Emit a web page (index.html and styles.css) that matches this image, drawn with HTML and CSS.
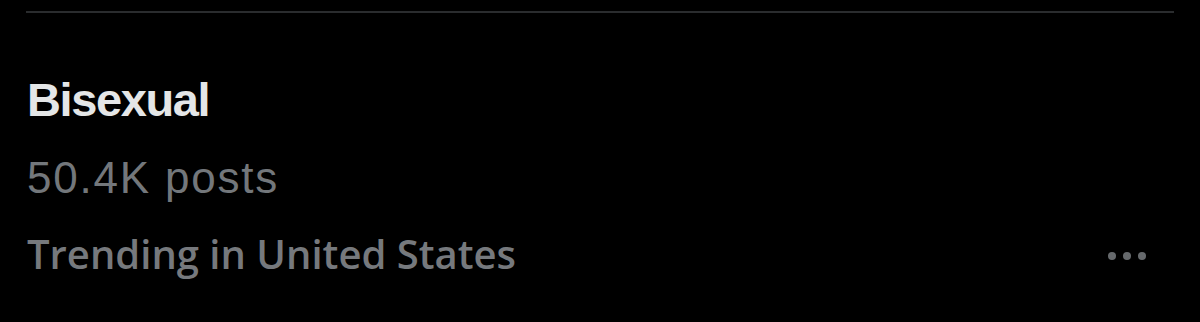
FILE: index.html
```html
<!DOCTYPE html>
<html lang="en">
<head>
  <meta charset="UTF-8">
  <title>Trending</title>
  <link rel="stylesheet" href="styles.css">
</head>
<body>
  <div class="divider"></div>
  <section class="trend">
    <h2 class="trend-name">Bisexual</h2>
    <p class="trend-count">50.4K posts</p>
    <div class="trend-footer">
      <span class="trend-place">Trending in United States</span>
      <button class="more" aria-label="More">
        <svg viewBox="0 0 40 12" width="40" height="12">
          <circle cx="5" cy="6" r="4"></circle>
          <circle cx="20" cy="6" r="4"></circle>
          <circle cx="35" cy="6" r="4"></circle>
        </svg>
      </button>
    </div>
  </section>
</body>
</html>
```

FILE: styles.css
```css
body {
  margin: 0;
  background: #000;
  font-family: 'Liberation Sans', Arial, sans-serif;
  height: 322px;
  overflow: hidden;
}
.divider {
  margin: 11px 26px 0;
  height: 2px;
  background: #2a2c2e;
}
.trend {
  padding: 0 26px 0 27px;
}
.trend-name {
  margin: 64px 0 0;
  font-size: 47px;
  line-height: 46px;
  font-weight: bold;
  letter-spacing: -1.4px;
  color: #e4e6e7;
}
.trend-count {
  margin: 33px 0 0;
  font-size: 44px;
  line-height: 44px;
  color: #73777b;
  letter-spacing: 1.8px;
}
.trend-footer {
  margin-top: 34px;
  display: flex;
  align-items: center;
  justify-content: space-between;
}
.trend-place {
  font-family: 'Open Sans', sans-serif;
  font-weight: 600;
  font-size: 40px;
  line-height: 40px;
  color: #76797d;
}
.more {
  background: none;
  border: 0;
  padding: 0;
  margin: 4px 27px 0 0;
  display: flex;
}
.more circle {
  fill: #66696c;
}
```
